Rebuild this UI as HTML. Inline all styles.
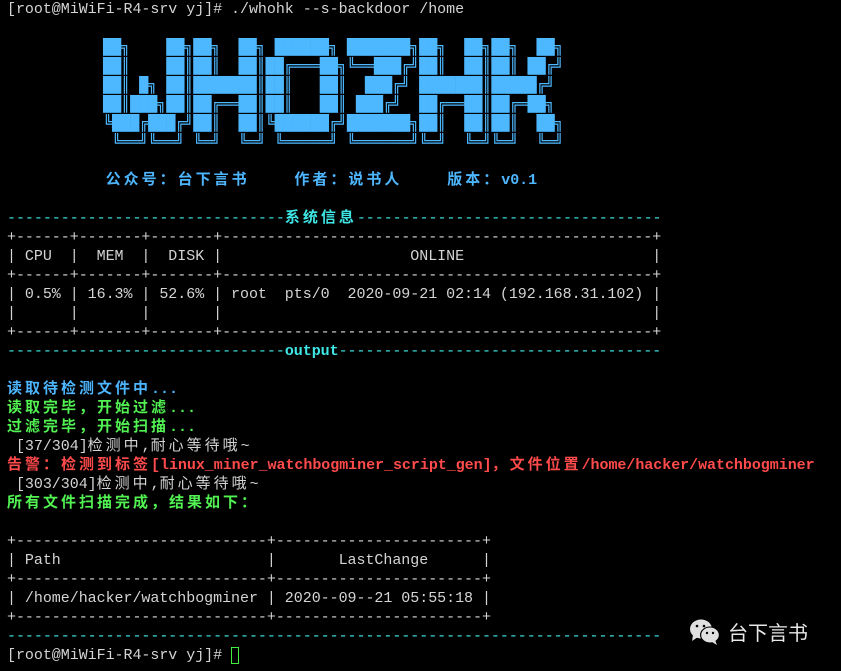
<!DOCTYPE html>
<html><head><meta charset="utf-8">
<style>
html,body{margin:0;padding:0;background:#000;width:841px;height:671px;overflow:hidden;}
#t{position:absolute;left:7px;top:0;font-family:"Liberation Mono","Noto Sans CJK SC",monospace;font-size:15px;color:#d4d4d4;letter-spacing:-0.04px;}
#t div{height:19px;line-height:19px;white-space:pre;overflow:visible;}
.c{letter-spacing:3px;font-family:"Noto Sans CJK SC",sans-serif;line-height:0;}
.b{color:#4db6ff;font-weight:bold}
.cy{color:#3ee6e6}
.cyb{color:#3ee6e6;font-weight:bold}
.g{color:#52f252;font-weight:bold}
.r{color:#ff4b4b;font-weight:bold}
#logo{position:absolute;left:103px;top:38px;margin:0;font-family:"DejaVu Sans Mono",monospace;font-size:15px;line-height:19px;color:#4db8ff;white-space:pre;}
.cur{display:inline-block;width:8px;height:17px;border:1px solid #3cf03c;vertical-align:-5px;box-sizing:border-box;}
#wm{position:absolute;left:688px;top:618px;color:#e8e8e8;font-family:"Noto Sans CJK SC",sans-serif;font-size:20px;line-height:28px;}
</style></head><body>
<div id="t">
<div>[root@MiWiFi-R4-srv yj]# ./whohk --s-backdoor /home</div>
<div> </div><div> </div><div> </div><div> </div><div> </div><div> </div><div> </div><div> </div>
<div>           <span class="b"><span class="c">公众号：台下言书</span>     <span class="c">作者：说书人</span>     <span class="c">版本：</span>v0.1</span></div>
<div> </div>
<div><span class="cy">-------------------------------</span><span class="cyb c">系统信息</span><span class="cy">----------------------------------</span></div>
<div>+------+-------+-------+------------------------------------------------+</div>
<div>| CPU  |  MEM  |  DISK |                     ONLINE                     |</div>
<div>+------+-------+-------+------------------------------------------------+</div>
<div>| 0.5% | 16.3% | 52.6% | root  pts/0  2020-09-21 02:14 (192.168.31.102) |</div>
<div>|      |       |       |                                                |</div>
<div>+------+-------+-------+------------------------------------------------+</div>
<div><span class="cy">-------------------------------</span><span class="cyb">output</span><span class="cy">------------------------------------</span></div>
<div> </div>
<div><span class="b"><span class="c">读取待检测文件中</span>...</span></div>
<div><span class="g"><span class="c">读取完毕，开始过滤</span>...</span></div>
<div><span class="g"><span class="c">过滤完毕，开始扫描</span>...</span></div>
<div> [37/304]<span class="c">检测中</span>,<span class="c">耐心等待哦</span>~</div>
<div><span class="r"><span class="c">告警：检测到标签</span>[linux_miner_watchbogminer_script_gen]<span class="c">，文件位置</span>/home/hacker/watchbogminer</span></div>
<div> [303/304]<span class="c">检测中</span>,<span class="c">耐心等待哦</span>~</div>
<div><span class="g"><span class="c">所有文件扫描完成，结果如下：</span></span></div>
<div> </div>
<div>+----------------------------+-----------------------+</div>
<div>| Path                       |       LastChange      |</div>
<div>+----------------------------+-----------------------+</div>
<div>| /home/hacker/watchbogminer | 2020--09--21 05:55:18 |</div>
<div>+----------------------------+-----------------------+</div>
<div><span class="cy">-------------------------------------------------------------------------</span></div>
<div>[root@MiWiFi-R4-srv yj]# <span class="cur"></span></div>
</div>
<pre id="logo">██╗    ██╗██╗  ██╗ ██████╗ ███████╗██╗  ██╗██╗  ██╗
██║    ██║██║  ██║██╔═══██╗╚══███╔╝██║  ██║██║ ██╔╝
██║ █╗ ██║███████║██║   ██║  ███╔╝ ███████║█████╔╝ 
██║███╗██║██╔══██║██║   ██║ ███╔╝  ██╔══██║██╔═██╗ 
╚███╔███╔╝██║  ██║╚██████╔╝███████╗██║  ██║██║  ██╗
 ╚══╝╚══╝ ╚═╝  ╚═╝ ╚═════╝ ╚══════╝╚═╝  ╚═╝╚═╝  ╚═╝</pre>
<div id="wm"><svg width="34" height="28" viewBox="0 0 34 28" style="vertical-align:-6px;margin-right:6px"><ellipse cx="13" cy="11" rx="11" ry="9.5" fill="#e0e0e0"/><path d="M5 17 L4 23 L10 19Z" fill="#e0e0e0"/><ellipse cx="22" cy="17" rx="10" ry="8.5" fill="#000"/><ellipse cx="22" cy="17" rx="8.8" ry="7.5" fill="#e0e0e0"/><path d="M27 22 L29 27 L24 24Z" fill="#e0e0e0"/><circle cx="9" cy="8" r="1.3" fill="#000"/><circle cx="16" cy="8" r="1.3" fill="#000"/><circle cx="19" cy="15" r="1.2" fill="#000"/><circle cx="25" cy="15" r="1.2" fill="#000"/></svg>台下言书</div>
</body></html>
